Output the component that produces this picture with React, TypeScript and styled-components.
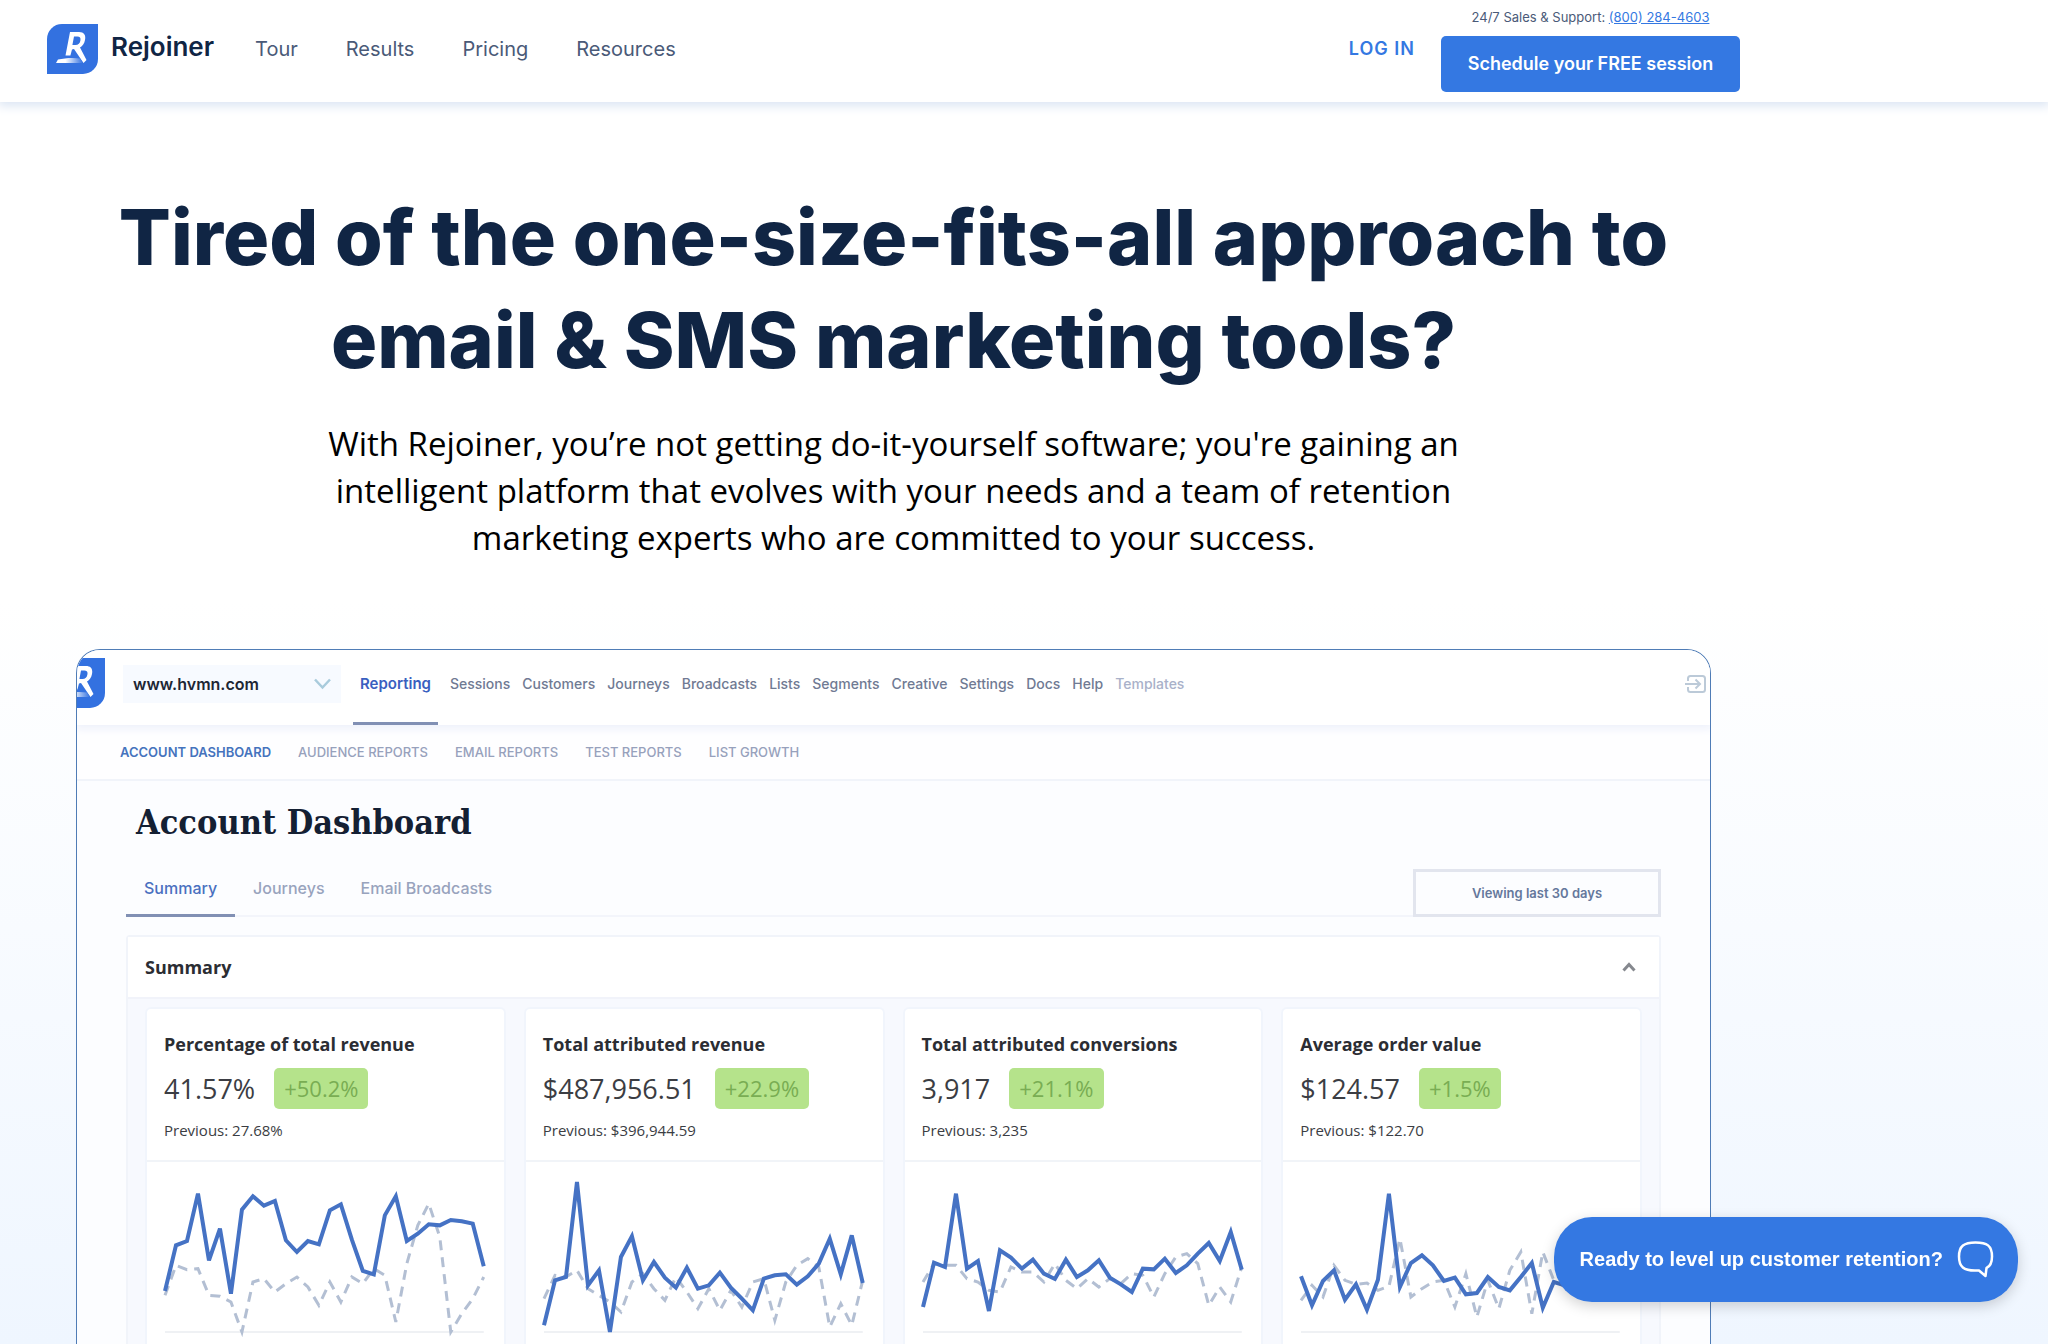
import React from "react";
import styled, { createGlobalStyle } from "styled-components";

const heading = `Inter, "Liberation Sans", sans-serif`;
const report = `"Open Sans", "Noto Sans", sans-serif`;
const blue = "#3478e2";
const navy = "#102544";

const GlobalStyle = createGlobalStyle`
  *, *::before, *::after { box-sizing: border-box; }
  body { margin: 0; background: #fff; font-family: ${heading}; color: ${navy}; }
  a { color: inherit; text-decoration: none; }
  button { font: inherit; border: 0; padding: 0; background: none; cursor: pointer; }
  h1, h2, h3, p { margin: 0; }
`;

const Page = styled.div`
  height: 100vh;
  overflow-y: auto;
  scrollbar-width: none;
  background: linear-gradient(#fff 600px, #eff6ff 1344px);
`;

const Header = styled.header`
  position: relative;
  background: #fff;
  box-shadow: 0 2px 10px 2px #dbe5f3;
`;

const HeaderInner = styled.div`
  display: flex;
  align-items: center;
  width: 100%;
  max-width: 1787px;
  height: 102px;
  padding: 0 47px;
`;

const Brand = styled.a`
  display: flex;
  align-items: center;
  gap: 13px;
  margin-right: 41px;
  padding-bottom: 4px;
  font-size: 26px;
  line-height: 46px;
  font-weight: 600;
  span { padding-bottom: 4px; }
`;

const MainNav = styled.nav`
  display: flex;
  flex: 1;
  gap: 48px;
  color: #4a5a78;
  font-size: 20px;
  line-height: 28px;
  padding-bottom: 4px;
`;

const Login = styled.a`
  margin-right: 26px;
  padding-bottom: 4px;
  color: ${blue};
  font-size: 18px;
  line-height: 28px;
  font-weight: 600;
  letter-spacing: 1px;
`;

const Contact = styled.div`
  display: flex;
  flex-direction: column;
  align-items: center;
  gap: 9px;
  width: 299px;
  color: #4a5a78;
  font-size: 13px;
  line-height: 20px;
  padding-bottom: 4px;
  white-space: nowrap;
  a { color: ${blue}; text-decoration: underline; }
`;

const Schedule = styled.button`
  width: 100%;
  height: 56px;
  border-radius: 5px;
  background: ${blue};
  color: #fff;
  font-size: 18px;
  font-weight: 600;
`;

const Hero = styled.main`
  width: 100%;
  max-width: 1787px;
  padding: 84px 76px 0;
`;

const Title = styled.h1`
  text-align: center;
  font-size: 77px;
  line-height: 103px;
  font-weight: 800;
`;

const Lead = styled.p`
  margin-top: 28px;
  text-align: center;
  color: #000;
  font-family: ${report};
  font-size: 33px;
  line-height: 47px;
`;

const Panel = styled.section`
  margin-top: 88px;
  overflow: hidden;
  border: 1px solid #4f7cb6;
  border-bottom: 0;
  border-radius: 24px 24px 0 0;
  background: #fcfdff;
`;

const AppBar = styled.div`
  position: relative;
  display: flex;
  align-items: center;
  height: 75px;
  padding-right: 3px;
  background: #fff;
  box-shadow: 0 2px 8px 2px #eef1fb;
`;

const AppLogo = styled.div`
  align-self: flex-start;
  margin: 8px 18px 0 -23px;
`;

const SiteSelect = styled.label`
  display: grid;
  align-items: center;
  width: 218px;
  height: 38px;
  margin: 0 12px 8px 0;
  background: #f7faff;
  select, svg { grid-area: 1 / 1; }
  select {
    width: 100%;
    height: 38px;
    padding: 0 10px;
    border: 0;
    appearance: none;
    background: none;
    color: #1d2634;
    font: 600 16px ${heading};
  }
  svg { justify-self: end; margin-right: 10px; pointer-events: none; }
`;

const AppLinks = styled.nav`
  display: flex;
  flex: 1;
  gap: 12px;
  align-self: stretch;
  font-size: 14px;
  line-height: 68px;
  font-weight: 500;
`;

const AppLink = styled.a<{ $tone?: "active" | "muted" }>`
  color: ${p => (p.$tone === "active" ? "#3a5fc0" : p.$tone === "muted" ? "#a9b1c9" : "#707a93")};
  ${p => p.$tone === "active" && `
    font-size: 15px;
    font-weight: 600;
    padding: 0 7px;
    border-bottom: 3px solid #8190b4;
  `}
`;

const SubNav = styled.nav`
  display: flex;
  gap: 27px;
  height: 56px;
  padding-left: 43px;
  border-bottom: 2px solid #f1f4fa;
  background: #fefeff;
  font-size: 13px;
  line-height: 54px;
  font-weight: 500;
`;

const SubLink = styled.a<{ $active?: boolean }>`
  color: ${p => (p.$active ? "#4573bd" : "#97a1bc")};
  font-weight: ${p => (p.$active ? 600 : 500)};
`;

const Body = styled.div`
  padding: 17px 49px 0;
`;

const BoardTitle = styled.h2`
  padding-left: 10px;
  color: #142033;
  font: 700 34px/48px "DejaVu Serif Condensed", "DejaVu Serif", serif;
`;

const TabRow = styled.div`
  display: flex;
  justify-content: space-between;
  height: 48px;
  margin-top: 23px;
  border-bottom: 2px solid #f3f5fb;
`;

const Tabs = styled.div`
  display: flex;
`;

const Tab = styled.button<{ $active?: boolean }>`
  height: 48px;
  padding: 0 18px 8px;
  border-bottom: 3px solid ${p => (p.$active ? "#8190b4" : "transparent")};
  color: ${p => (p.$active ? "#4a70c0" : "#98a3bd")};
  font-size: 16px;
  font-weight: 500;
`;

const Range = styled.button`
  width: 248px;
  height: 48px;
  border: 3px solid #e2e5ee;
  color: #65789c;
  font-size: 13px;
  font-weight: 600;
`;

const SummaryBox = styled.section`
  margin-top: 18px;
  border: 2px solid #f1f4fa;
  border-bottom: 0;
  border-radius: 4px 4px 0 0;
  background: #f7f9fe;
  font-family: ${report};
`;

const SummaryHead = styled.div`
  display: flex;
  align-items: center;
  justify-content: space-between;
  height: 62px;
  padding: 0 22px 0 17px;
  border-bottom: 2px solid #f1f3fa;
  background: #fff;
  color: #2b2d33;
  font-size: 18px;
  font-weight: 700;
`;

const Cards = styled.div`
  display: grid;
  grid-template-columns: repeat(4, 1fr);
  gap: 18px;
  padding: 8px 17px 0;
`;

const Card = styled.article`
  border: 2px solid #f1f5fc;
  border-bottom: 0;
  border-radius: 6px 6px 0 0;
  background: #fff;
  color: #3b3d43;
`;

const CardHead = styled.div`
  height: 153px;
  padding: 22px 17px 0;
  border-bottom: 2px solid #f1f4f8;
  h3 { color: #2b2d33; font-size: 18px; line-height: 26px; font-weight: 700; }
  p { margin-top: 9px; font-size: 15px; line-height: 24px; }
`;

const Figure = styled.div`
  display: flex;
  align-items: center;
  gap: 19px;
  margin-top: 11px;
  font-size: 27px;
  line-height: 41px;
`;

const Badge = styled.span`
  padding: 0 10px;
  border-radius: 5px;
  background: #b5e38b;
  color: #79ad53;
  font-size: 22px;
`;

const ChartArea = styled.div`
  padding: 0 20px 40px 18px;
  svg { display: block; width: 100%; height: 174px; overflow: visible; }
`;

const Chat = styled.button`
  position: fixed;
  right: 30px;
  bottom: 42px;
  display: flex;
  align-items: center;
  gap: 14px;
  height: 85px;
  padding: 0 24px 0 26px;
  border-radius: 38px / 40px;
  background: ${blue};
  color: #fff;
  box-shadow: 0 4px 14px rgba(0, 0, 0, 0.18);
  font: 700 20px "Liberation Sans", Arial, sans-serif;
`;

function Logo({ id }: { id: string }) {
  return (
    <svg width="51" height="50" viewBox="0 0 51 50" aria-hidden="true">
      <defs>
        <linearGradient id={id} x1="0" x2="1">
          <stop offset="0" stopColor="#fff" />
          <stop offset="0.35" stopColor="#fff" />
          <stop offset="1" stopColor="#3371e0" />
        </linearGradient>
      </defs>
      <path d="M15 0H51V35A15 15 0 0 1 36 50H0V15A15 15 0 0 1 15 0Z" fill="#3371e0" />
      <path
        d="M23 8h9c5 0 7 3 6 8-.6 3.500-2.500 6-5 7.500L39.500 36l-3 3L27 25l-2 .5-1.600 6H18.500ZM27 12.500l-1.600 8.500h3c3 0 4.500-1.600 5-4.500.5-2.600-.5-4-3-4Z"
        fill="#fff"
        fillRule="evenodd"
      />
      <path d="M11 35.500C18 34 26 33.500 33 34.500L36 39H9Z" fill={`url(#${id})`} />
    </svg>
  );
}

type Metric = {
  title: string;
  value: string;
  change: string;
  previous: string;
  current: number[];
  past: number[];
};

const metrics: Metric[] = [
  {
    title: "Percentage of total revenue",
    value: "41.57%",
    change: "+50.2%",
    previous: "27.68%",
    current: [1112, 975, 962, 820, 1020, 925, 1120, 868, 828, 856, 842, 960, 995, 962, 972, 870, 852, 958, 1052, 1062, 885, 828, 962, 940, 912, 915, 899, 903, 910, 1038],
    past: [1125, 1035, 1048, 1045, 1125, 1128, 1145, 1235, 1085, 1075, 1115, 1090, 1070, 1100, 1155, 1085, 1145, 1070, 1090, 1045, 1065, 1205, 1030, 915, 850, 950, 1235, 1180, 1135, 1070],
  },
  {
    title: "Total attributed revenue",
    value: "$487,956.51",
    change: "+22.9%",
    previous: "$396,944.59",
    current: [1215, 1080, 1070, 785, 1095, 1050, 1235, 1010, 948, 1080, 1025, 1072, 1102, 1042, 1105, 1095, 1057, 1102, 1135, 1170, 1075, 1065, 1062, 1093, 1068, 1030, 955, 1062, 945, 1088],
    past: [1135, 1065, 1070, 1050, 1105, 1125, 1145, 1175, 1085, 1060, 1105, 1140, 1070, 1115, 1165, 1105, 1170, 1110, 1160, 1085, 1075, 1200, 1085, 1035, 1015, 1040, 1220, 1150, 1215, 1080],
  },
  {
    title: "Total attributed conversions",
    value: "3,917",
    change: "+21.1%",
    previous: "3,235",
    current: [1160, 1027, 1040, 820, 1045, 1022, 1172, 990, 1012, 1045, 1018, 1060, 1076, 1018, 1070, 1050, 1020, 1072, 1092, 1115, 1045, 1047, 1015, 1058, 1035, 1000, 968, 1022, 935, 1048],
    past: [1085, 1030, 1035, 1035, 1075, 1085, 1110, 1115, 1040, 1055, 1055, 1085, 1030, 1080, 1105, 1075, 1100, 1075, 1090, 1060, 1065, 1130, 1060, 1010, 1000, 1030, 1155, 1100, 1145, 1040],
  },
  {
    title: "Average order value",
    value: "$124.57",
    change: "+1.5%",
    previous: "$122.70",
    current: [1068, 1155, 1082, 1050, 1138, 1092, 1168, 1078, 820, 1100, 1028, 1005, 1035, 1082, 1072, 1122, 1118, 1070, 1100, 1110, 1070, 1028, 1162, 1085, 1095, 1060, 1090, 1040, 1080, 1070],
    past: [1140, 1095, 1130, 1035, 1080, 1092, 1088, 1110, 1098, 955, 1130, 1105, 1085, 1080, 1160, 1060, 1190, 1080, 1165, 1050, 995, 1180, 995, 1080, 1100, 1060, 1110, 1070, 1090, 1080],
  },
];

const STEP = 33;
const TOP = 725;
const toPoints = (values: number[]) => values.map((v, i) => `${i * STEP},${v - TOP}`).join(" ");

function Chart({ metric }: { metric: Metric }) {
  return (
    <svg viewBox={`0 0 ${STEP * 29} 522`} preserveAspectRatio="none" role="img" aria-label={metric.title}>
      <line x1="0" x2={STEP * 29} y1="510" y2="510" stroke="#eff1f4" strokeWidth="2" vectorEffect="non-scaling-stroke" />
      <polyline points={toPoints(metric.past)} fill="none" stroke="#b3bfd3" strokeWidth="3" strokeDasharray="10 7" vectorEffect="non-scaling-stroke" />
      <polyline points={toPoints(metric.current)} fill="none" stroke="#4572c4" strokeWidth="4" vectorEffect="non-scaling-stroke" />
    </svg>
  );
}

const appLinks = ["Sessions", "Customers", "Journeys", "Broadcasts", "Lists", "Segments", "Creative", "Settings", "Docs", "Help"];
const reports = ["ACCOUNT DASHBOARD", "AUDIENCE REPORTS", "EMAIL REPORTS", "TEST REPORTS", "LIST GROWTH"];

export default function App() {
  return (
    <Page>
      <GlobalStyle />
      <Header>
        <HeaderInner>
          <Brand href="#">
            <Logo id="brand-swoosh" />
            <span>Rejoiner</span>
          </Brand>
          <MainNav>
            {["Tour", "Results", "Pricing", "Resources"].map(t => <a key={t} href="#">{t}</a>)}
          </MainNav>
          <Login href="#">LOG IN</Login>
          <Contact>
            <span>24/7 Sales &amp; Support: <a href="tel:8002844603">(800) 284-4603</a></span>
            <Schedule>Schedule your FREE session</Schedule>
          </Contact>
        </HeaderInner>
      </Header>

      <Hero>
        <Title>Tired of the one-size-fits-all approach to<br />email &amp; SMS marketing tools?</Title>
        <Lead>
          With Rejoiner, you’re not getting do-it-yourself software; you're gaining an<br />
          intelligent platform that evolves with your needs and a team of retention<br />
          marketing experts who are committed to your success.
        </Lead>

        <Panel>
          <AppBar>
            <AppLogo><Logo id="app-swoosh" /></AppLogo>
            <SiteSelect>
              <select aria-label="Site"><option>www.hvmn.com</option></select>
              <svg width="17" height="12" viewBox="0 0 17 12" fill="none" stroke="#a9cbdc" strokeWidth="2.500"><path d="M1 1.500l7.500 8 7.500-8" /></svg>
            </SiteSelect>
            <AppLinks>
              <AppLink href="#" $tone="active">Reporting</AppLink>
              {appLinks.map(t => <AppLink key={t} href="#">{t}</AppLink>)}
              <AppLink href="#" $tone="muted">Templates</AppLink>
            </AppLinks>
            <svg width="22" height="26" viewBox="0 0 22 26" fill="none" stroke="#bccad8" strokeWidth="2"><path d="M3 6V3.500Q3 1 5.500 1h12Q20 1 20 3.500v11q0 2.500-2.500 2.500h-12Q3 17 3 14.500V12M0 9h15M10.500 4.500L15 9l-4.500 4.500" /></svg>
          </AppBar>
          <SubNav>
            {reports.map((t, i) => <SubLink key={t} href="#" $active={i === 0}>{t}</SubLink>)}
          </SubNav>
          <Body>
            <BoardTitle>Account Dashboard</BoardTitle>
            <TabRow>
              <Tabs>
                <Tab $active>Summary</Tab>
                <Tab>Journeys</Tab>
                <Tab>Email Broadcasts</Tab>
              </Tabs>
              <Range>Viewing last 30 days</Range>
            </TabRow>
            <SummaryBox>
              <SummaryHead>
                Summary
                <svg width="16" height="10" viewBox="0 0 16 10" fill="none" stroke="#85888e" strokeWidth="3"><path d="M2.500 8.500L8 2.500l5.500 6" /></svg>
              </SummaryHead>
              <Cards>
                {metrics.map(m => (
                  <Card key={m.title}>
                    <CardHead>
                      <h3>{m.title}</h3>
                      <Figure>{m.value}<Badge>{m.change}</Badge></Figure>
                      <p>Previous: {m.previous}</p>
                    </CardHead>
                    <ChartArea><Chart metric={m} /></ChartArea>
                  </Card>
                ))}
              </Cards>
            </SummaryBox>
          </Body>
        </Panel>
      </Hero>

      <Chat>
        Ready to level up customer retention?
        <svg width="37" height="37" viewBox="0 0 37 37" fill="none" stroke="#fff" strokeWidth="2.500" strokeLinejoin="round"><path d="M18.500 1.500C30 1.500 35 4.500 35 15.500c0 6-1 9.500-5.500 11.500L28.500 35 22 29.500h-4C7 29.500 2 26 2 15.500S7 1.500 18.500 1.500Z" /></svg>
      </Chat>
    </Page>
  );
}
